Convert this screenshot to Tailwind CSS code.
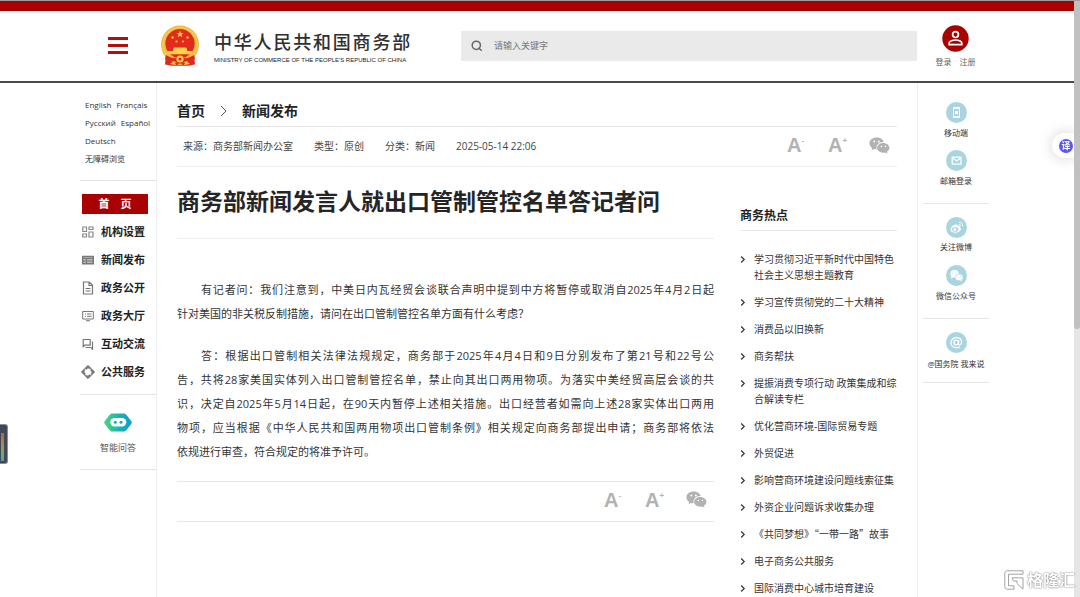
<!DOCTYPE html>
<html lang="zh-CN">
<head>
    <meta charset="UTF-8">
    <meta name="viewport" content="width=device-width, initial-scale=1.0">
    <title>商务部新闻发言人就出口管制管控名单答记者问</title>
    <script src="https://cdn.jsdelivr.net/npm/@tailwindcss/browser@4"></script>
</head>
<body class="h-screen overflow-hidden bg-white pr-[6px] font-['Open_Sans','Noto_Sans_CJK_SC',sans-serif] text-[#333]">

    <!-- shared icons -->
    <svg class="hidden">
        <symbol id="wechat" viewBox="0 0 22 18">
            <path fill="currentColor" d="M8 0.5C3.6 .5 .3 3.200 .3 6.700c0 2 1.100 3.700 2.900 4.900L2.600 14l2.700-1.400c.9.2 1.800.3 2.700.3-1-4 2-7.600 7.600-7.500C14.900 2.500 11.800.5 8 .5z"/>
            <path fill="currentColor" d="M15 6.300c-3.700 0-6.500 2.300-6.500 5.200s2.800 5.200 6.500 5.200c.8 0 1.500-.1 2.200-.3l2.300 1.300-.6-2.100c1.600-1 2.600-2.400 2.600-4.100 0-2.900-2.800-5.200-6.500-5.200z"/>
            <g fill="#fff"><circle cx="5.500" cy="4.800" r="1"/><circle cx="10.300" cy="4.800" r="1"/><circle cx="12.900" cy="10" r=".8"/><circle cx="17.200" cy="10" r=".8"/></g>
        </symbol>
        <symbol id="chev" viewBox="0 0 6 8">
            <path d="M1.200 1l3 3-3 3" fill="none" stroke="currentColor" stroke-width="1.200"/>
        </symbol>
    </svg>

    <div class="-mr-[6px] h-px bg-[#a09a9a]"></div>
    <div class="h-[10px] bg-[#a90000]"></div>

    <!-- header -->
    <header class="border-b-2 border-[#4a4a4a]">
        <div class="mx-auto flex h-[70px] max-w-[914px] items-center">
            <button class="mb-[2px] ml-7 flex h-[17px] w-5 flex-col justify-between" aria-label="菜单">
                <span class="h-[3px] w-full bg-[#b01010]"></span>
                <span class="h-[3px] w-full bg-[#b01010]"></span>
                <span class="h-[3px] w-full bg-[#b01010]"></span>
            </button>
            <a href="#" class="ml-8 flex items-center">
                <svg width="40" height="42" viewBox="0 0 40 42">
                    <path d="M6 29L5 39.500c3 .3 4.500 1.500 8 1.200h14c3.500.3 5-.9 8-1.200L34 29z" fill="#dc2a1c"/>
                    <circle cx="20" cy="19.500" r="19" fill="#f3b93c"/>
                    <circle cx="20" cy="19.500" r="17" fill="none" stroke="#f8d468" stroke-width="1.500" stroke-dasharray="2 1"/>
                    <circle cx="20" cy="18.500" r="14.600" fill="#e02b1d"/>
                    <path d="M20 5.500l.9 2.500h2.700l-2.200 1.600.8 2.600-2.200-1.500-2.200 1.500.8-2.600L16.400 8h2.700z" fill="#fbd04c"/>
                    <g fill="#f7c548"><circle cx="12.500" cy="12.500" r="1.200"/><circle cx="27.500" cy="12.500" r="1.200"/><circle cx="16.500" cy="16.500" r="1.100"/><circle cx="23" cy="16.500" r="1.100"/></g>
                    <path d="M13 24l1-1.500h12l1 1.500v2h5.500v3.200h-25V26H13z" fill="#fbd04c"/>
                    <path d="M6 30c4 2.500 7 3.500 10 3 1-2.500 7-2.500 8 0 3 .5 6-.5 10-3l1 4c-4 2-7 3-10 2.500-2 2.500-8 2.500-10 0-3 .5-6-.5-10-2.500z" fill="#dc2a1c"/>
                    <circle cx="20" cy="34" r="3.600" fill="#fbd04c"/>
                    <circle cx="20" cy="34" r="1.600" fill="#e02b1d"/>
                    <path d="M10 39l4-3 2 4zM30 39l-4-3-2 4zM17 40l3-1.500 3 1.500z" fill="#f7c548"/>
                </svg>
                <span class="ml-[14px] block pt-[3px] whitespace-nowrap">
                    <span class="block text-lg leading-6 font-medium tracking-widest text-[#2f2f2f]">中华人民共和国商务部</span>
                    <span class="block font-['Liberation_Sans',sans-serif] text-[6px] leading-3 text-[#222]">MINISTRY OF COMMERCE OF THE PEOPLE'S REPUBLIC OF CHINA</span>
                </span>
            </a>
            <form class="ml-[49px] flex h-[30px] flex-1 items-center bg-[#eaeaea] pl-[10px]">
                <svg width="12" height="12" viewBox="0 0 12 12" fill="none" stroke="#666" stroke-width="1.500"><circle cx="5.300" cy="5.300" r="4.100"/><path d="M7.500 7.800l3.200 3"/></svg>
                <input type="text" aria-label="搜索" placeholder="请输入关键字" class="ml-[11px] flex-1 bg-transparent text-[9px] outline-none placeholder:text-[#777]">
            </form>
            <div class="flex w-[77px] flex-col items-center">
                <svg width="27" height="27" viewBox="0 0 27 27"><circle cx="13.500" cy="13.500" r="13.200" fill="#a90000"/><g fill="none" stroke="#fff" stroke-width="1.700"><circle cx="13.500" cy="9.600" r="2.900"/><path d="M7.200 19.600v-1.500c0-2 3.800-3.100 6.300-3.100s6.300 1.100 6.300 3.100v1.500z"/></g></svg>
                <div class="mt-1 flex gap-2 text-[8px] leading-3 text-[#666]"><a href="#">登录</a><a href="#">注册</a></div>
            </div>
        </div>
    </header>

    <div class="mx-auto flex min-h-full max-w-[914px]">

        <!-- left nav -->
        <aside class="w-[77px] shrink-0 border-r border-[#eee]">
            <div class="border-b border-[#e4e4e4] pt-[13px] pb-3 pl-[5px] text-[8px] leading-[18px] whitespace-nowrap">
                <div class="flex gap-[5px]"><a href="#">English</a><a href="#">Français</a></div>
                <div class="flex gap-[5px]"><a href="#">Русский</a><a href="#">Español</a></div>
                <a href="#" class="block">Deutsch</a>
                <a href="#" class="block">无障碍浏览</a>
            </div>
            <nav class="border-b border-[#e4e4e4] px-[2px] pt-[13px] pb-2 text-[11px] font-bold text-[#222]">
                <a href="#" class="mr-[6px] mb-1 block bg-[#a90000] text-center leading-5 text-white">首&emsp;页</a>
                <a href="#" class="flex h-7 items-center gap-[7px]">
                    <svg width="12" height="12" viewBox="0 0 12 12" fill="none" stroke="#888" stroke-width="1.200"><path d="M.8 1h3.700v4.500H.8zM.8 8h3.700v3H.8zM7 1h4v2.500H7zM7 6h4v5H7z"/></svg>机构设置</a>
                <a href="#" class="flex h-7 items-center gap-[7px]">
                    <svg width="12" height="12" viewBox="0 0 12 12" fill="none" stroke="#777"><path d="M.7 2.500h10.600v7.300H.7z" fill="#bbb" stroke-width="1.400"/><path d="M1 4.500h10M1 7h10M4.500 4v5.500"/></svg>新闻发布</a>
                <a href="#" class="flex h-7 items-center gap-[7px]">
                    <svg width="12" height="14" viewBox="0 0 12 14" fill="none" stroke="#777" stroke-width="1.200"><path d="M1.500 1h5.800l3.200 3.300V13h-9zM7 1v3.500h3.500M3.500 7.500h5M3.500 10h5"/></svg>政务公开</a>
                <a href="#" class="flex h-7 items-center gap-[7px]">
                    <svg width="12" height="12" viewBox="0 0 12 12" fill="none" stroke="#777"><path d="M.7 1.500h10.600v7.500H.7zM4 10.700h4M3 4h1M5 4h4.500M3 6.300h1M5 6.300h4.500"/></svg>政务大厅</a>
                <a href="#" class="flex h-7 items-center gap-[7px]">
                    <svg width="12" height="12" viewBox="0 0 12 12" fill="none" stroke="#777" stroke-width="1.200"><path d="M1.200 1.500h7v5.700H2.800L1.200 8.700zM10.500 3.500v7.800L9 9.500H3.500"/></svg>互动交流</a>
                <a href="#" class="flex h-7 items-center gap-[7px]">
                    <svg class="-mx-px" width="14" height="14" viewBox="0 0 14 14" fill="#777"><path d="M7 .3l3.200 3.200H8.300L7 2.800 5.500 4.300 3.800 3.500zM13.700 7l-3.200 3.200V8.300l.7-1.300-1.500-1.500.8-1.700zM7 13.700l-3.200-3.200h1.900l1.300.7 1.500-1.500 1.700.8zM.3 7l3.200-3.200v1.900L2.800 7l1.500 1.500-.8 1.700z" stroke="#777" stroke-width=".8"/></svg>公共服务</a>
            </nav>
            <a href="#" class="flex flex-col items-center border-b border-[#e4e4e4] pt-[18px] pb-[13px] text-[9px] leading-4 text-[#555]">
                <svg width="28" height="19" viewBox="0 0 28 19">
                    <defs><linearGradient id="bot"><stop offset="0" stop-color="#4fd57c"/><stop offset=".55" stop-color="#13b5b1"/><stop offset="1" stop-color="#1598d8"/></linearGradient></defs>
                    <path d="M8.500.5h11c1.500 0 2.200.6 3 1.500l4.700 6c.8 1 .8 2 0 3l-4.700 6c-.8.900-1.500 1.500-3 1.500h-11c-1.500 0-2.200-.6-3-1.500L.8 11c-.8-1-.8-2 0-3l4.700-6C6.300 1.100 7 .5 8.500.5z" fill="url(#bot)"/>
                    <rect x="6.300" y="5" width="16" height="8.500" rx="4.200" fill="#fff"/>
                    <circle cx="11.300" cy="9.200" r="1.500" fill="#16a9b5"/><circle cx="17" cy="9.200" r="1.500" fill="#16a9b5"/>
                </svg>
                <span class="mt-2">智能问答</span>
            </a>
        </aside>

        <!-- content -->
        <main class="min-w-0 flex-1 px-5">
            <div class="flex items-center border-b border-[#e8e8e8] pt-[17px] pb-[5px] text-sm leading-[21px] font-bold text-[#222]">
                <a href="#">首页</a>
                <svg class="mx-[14px]" width="9" height="12" viewBox="0 0 9 12" fill="none" stroke="#555"><path d="M2 1l5 5-5 5"/></svg>
                <a href="#">新闻发布</a>
            </div>
            <div class="flex h-10 items-center border-b border-[#eee] pl-[6px] text-[10px] text-[#444]">
                <span>来源：商务部新闻办公室</span>
                <span class="ml-[21px]">类型：原创</span>
                <span class="ml-[21px]">分类：新闻</span>
                <span class="ml-[21px]">2025-05-14 22:06</span>
                <div class="ml-auto flex items-center gap-[23px] pr-[7px] pb-[3px] font-['Liberation_Sans',sans-serif] font-bold text-[#b2b2b2]">
                    <button class="flex w-[18px] items-start text-xl leading-5" aria-label="缩小字号">A<sup class="top-0 text-[8px] leading-3">-</sup></button>
                    <button class="flex w-[18px] items-start text-xl leading-5" aria-label="放大字号">A<sup class="top-0 text-[8px] leading-3">+</sup></button>
                    <button aria-label="微信分享"><svg width="21" height="17"><use href="#wechat"/></svg></button>
                </div>
            </div>

            <div class="flex gap-[26px]">
                <article class="min-w-0 flex-1">
                    <h1 class="border-b border-[#eee] pt-4 pb-[19px] text-[23px] leading-9 font-bold whitespace-nowrap text-[#252525]">商务部新闻发言人就出口管制管控名单答记者问</h1>
                    <div class="pt-[39px] pb-[17px] text-[11px] leading-6 [text-align-last:justify]">
                        <p class="indent-6">有记者问：我们注意到，中美日内瓦经贸会谈联合声明中提到中方将暂停或取消自2025年4月2日起
                            <span class="block indent-0 [text-align-last:auto]">针对美国的非关税反制措施，请问在出口管制管控名单方面有什么考虑？</span>
                        </p>
                        <p class="mt-[18px] indent-6">答：根据出口管制相关法律法规规定，商务部于2025年4月4日和9日分别发布了第21号和22号公<br>告，共将28家美国实体列入出口管制管控名单，禁止向其出口两用物项。为落实中美经贸高层会谈的共<br>识，决定自2025年5月14日起，在90天内暂停上述相关措施。出口经营者如需向上述28家实体出口两用<br>物项，应当根据《中华人民共和国两用物项出口管制条例》相关规定向商务部提出申请；商务部将依法
                            <span class="block indent-0 [text-align-last:auto]">依规进行审查，符合规定的将准予许可。</span>
                        </p>
                    </div>
                    <div class="flex h-[41px] items-center justify-end gap-[23px] border-y border-[#e8e8e8] pr-[7px] pb-1 font-['Liberation_Sans',sans-serif] font-bold text-[#b2b2b2]">
                        <button class="flex w-[18px] items-start text-xl leading-5" aria-label="缩小字号">A<sup class="top-0 text-[8px] leading-3">-</sup></button>
                        <button class="flex w-[18px] items-start text-xl leading-5" aria-label="放大字号">A<sup class="top-0 text-[8px] leading-3">+</sup></button>
                        <button aria-label="微信分享"><svg width="21" height="17"><use href="#wechat"/></svg></button>
                    </div>
                </article>

                <section class="w-[157px] shrink-0 pt-10">
                    <h2 class="border-b border-[#e8e8e8] pb-[5px] text-xs leading-[18px] font-bold text-[#222]">商务热点</h2>
                    <ul class="mt-5 flex flex-col gap-[11px] text-[10px] leading-4">
                        <li class="flex gap-2"><svg class="mt-1 shrink-0" width="6" height="9"><use href="#chev"/></svg><a href="#">学习贯彻习近平新时代中国特色<br>社会主义思想主题教育</a></li>
                        <li class="flex gap-2"><svg class="mt-1 shrink-0" width="6" height="9"><use href="#chev"/></svg><a href="#">学习宣传贯彻党的二十大精神</a></li>
                        <li class="flex gap-2"><svg class="mt-1 shrink-0" width="6" height="9"><use href="#chev"/></svg><a href="#">消费品以旧换新</a></li>
                        <li class="flex gap-2"><svg class="mt-1 shrink-0" width="6" height="9"><use href="#chev"/></svg><a href="#">商务帮扶</a></li>
                        <li class="flex gap-2"><svg class="mt-1 shrink-0" width="6" height="9"><use href="#chev"/></svg><a href="#" class="whitespace-nowrap">提振消费专项行动 政策集成和综<br>合解读专栏</a></li>
                        <li class="flex gap-2"><svg class="mt-1 shrink-0" width="6" height="9"><use href="#chev"/></svg><a href="#">优化营商环境-国际贸易专题</a></li>
                        <li class="flex gap-2"><svg class="mt-1 shrink-0" width="6" height="9"><use href="#chev"/></svg><a href="#">外贸促进</a></li>
                        <li class="flex gap-2"><svg class="mt-1 shrink-0" width="6" height="9"><use href="#chev"/></svg><a href="#">影响营商环境建设问题线索征集</a></li>
                        <li class="flex gap-2"><svg class="mt-1 shrink-0" width="6" height="9"><use href="#chev"/></svg><a href="#">外资企业问题诉求收集办理</a></li>
                        <li class="flex gap-2"><svg class="mt-1 shrink-0" width="6" height="9"><use href="#chev"/></svg><a href="#" class="font-['Noto_Sans_CJK_SC',sans-serif] whitespace-nowrap">《共同梦想》“一带一路”故事</a></li>
                        <li class="flex gap-2"><svg class="mt-1 shrink-0" width="6" height="9"><use href="#chev"/></svg><a href="#">电子商务公共服务</a></li>
                        <li class="flex gap-2"><svg class="mt-1 shrink-0" width="6" height="9"><use href="#chev"/></svg><a href="#">国际消费中心城市培育建设</a></li>
                    </ul>
                </section>
            </div>
        </main>

        <!-- right tools -->
        <aside class="w-[77px] shrink-0 border-l border-[#eee] px-[5px] text-center text-[8px] leading-3 whitespace-nowrap">
            <div class="flex flex-col gap-[11px] border-b border-[#e8e8e8] pt-[19px] pb-4">
                <a href="#" class="flex flex-col items-center gap-1">
                    <svg width="21" height="21" viewBox="0 0 21 21"><circle cx="10.500" cy="10.500" r="10.500" fill="#a8d5df"/><rect x="7" y="5" width="7" height="11" rx="1" fill="#fff"/><path d="M8 7h5v7H8z" fill="#a8d5df"/><path d="M9 9h3v3H9z" fill="#fff"/></svg>
                    <span>移动端</span></a>
                <a href="#" class="flex flex-col items-center gap-1">
                    <svg width="21" height="21" viewBox="0 0 21 21"><circle cx="10.500" cy="10.500" r="10.500" fill="#a8d5df"/><path d="M6.200 7.200h8.800v7H6.200zM6.200 7.500l4.400 3.600L15 7.500" fill="none" stroke="#fff" stroke-width="1.300" stroke-linejoin="round"/></svg>
                    <span>邮箱登录</span></a>
            </div>
            <div class="flex flex-col gap-3 border-b border-[#e8e8e8] pt-[13px] pb-4">
                <a href="#" class="flex flex-col items-center gap-[3px]">
                    <svg width="21" height="21" viewBox="0 0 21 21"><circle cx="10.500" cy="10.500" r="10.500" fill="#a8d5df"/><path d="M9 7.800c1.500-.7 2.700-.5 2.500.9 1.800-.5 2.700 0 2.200 1.200 3 1.400.5 5.800-4.500 5.800-3 0-4.700-1.500-4.700-3.300C4.500 10.500 7 8.200 9 7.800z" fill="#fff"/><ellipse cx="9.200" cy="12.400" rx="3.200" ry="2.300" fill="#a8d5df"/><circle cx="8.900" cy="12.600" r="1.500" fill="#fff"/><path d="M13 7.500c1.200-.2 1.800.6 1.600 1.600M13 5.500c2.500-.3 3.900 1.400 3.500 3.900" fill="none" stroke="#fff"/></svg>
                    <span>关注微博</span></a>
                <a href="#" class="flex flex-col items-center gap-1">
                    <svg width="21" height="21" viewBox="0 0 21 21"><circle cx="10.500" cy="10.500" r="10.500" fill="#a8d5df"/><ellipse cx="8.500" cy="8.800" rx="4.200" ry="3.700" fill="#fff"/><path d="M5.600 11l-.5 2.800 2.500-1.500z" fill="#fff"/><ellipse cx="13" cy="12.400" rx="4" ry="3.300" fill="#fff" stroke="#a8d5df" stroke-width=".6"/><path d="M14 15l2 1.300-.2-2z" fill="#fff"/><g fill="#a8d5df"><circle cx="7" cy="8" r=".6"/><circle cx="10" cy="8" r=".6"/><circle cx="11.700" cy="11.700" r=".5"/><circle cx="14.300" cy="11.700" r=".5"/></g></svg>
                    <span>微信公众号</span></a>
            </div>
            <div class="border-b border-[#e8e8e8] pt-[13px] pb-3">
                <a href="#" class="flex flex-col items-center gap-[5px]">
                    <svg width="21" height="21" viewBox="0 0 21 21"><circle cx="10.500" cy="10.500" r="10.500" fill="#a8d5df"/><g fill="none" stroke="#fff" stroke-width="1.300"><circle cx="10.200" cy="10.500" r="2.300"/><path d="M12.800 8.200l-.5 3.600c0 2 3.300 1.300 3.300-1.600 0-2.700-2.200-4.700-5.100-4.700-3.100 0-5.500 2.300-5.500 5.200 0 3 2.400 5 5.500 5 1.200 0 2.300-.3 3.200-.8"/></g></svg>
                    <span>@国务院 我来说</span></a>
            </div>
        </aside>
    </div>

    <!-- page scrollbar -->
    <div class="fixed top-px right-0 bottom-0 w-[6px] bg-[#e6e6e6]"><div class="h-[55%] rounded-b-full bg-[#c1c1c1]"></div></div>

    <!-- translate bubble -->
    <button class="fixed top-[133px] right-[6px] flex h-[25px] w-[22px] items-center rounded-l-full bg-white pl-[7px] shadow-[0_0_14px_rgba(0,0,0,0.18)] [clip-path:inset(-20px_0_-20px_-20px)]" aria-label="翻译">
        <span class="flex size-[14px] shrink-0 items-center justify-center rounded-full bg-[#5a55f5] text-[9px] leading-3 font-bold text-white">译</span>
    </button>

    <!-- floating volume widget -->
    <div class="fixed top-[424px] left-0 h-10 w-2 rounded-r-[3px] border border-l-0 border-[#8b8e98] bg-[#414758] pt-2 pl-[1px]">
        <div class="h-7 w-[3px] bg-linear-to-b from-[#a5684e] via-[#9a9a4c] to-[#3fae94]"></div>
    </div>

    <!-- watermark -->
    <div class="fixed right-[5px] bottom-[5px] flex items-center gap-[3px]">
        <svg width="20" height="20" viewBox="0 0 20 20" fill="#fff" stroke="#999" stroke-width=".9" stroke-linejoin="round"><path d="M3.500.8H19v3.400H4.500v11.600H10v3.400H3.500C1.600 19.200.8 18.400.8 16.500v-13C.8 1.600 1.600.8 3.500.8z"/><path d="M8 7.800h11v11.400L13 13.500V11H9.500z"/></svg>
        <span class="text-base leading-6 font-bold text-white [text-shadow:0_0_1px_#777,0_0_2px_#888]">格隆汇</span>
    </div>
</body>
</html>
